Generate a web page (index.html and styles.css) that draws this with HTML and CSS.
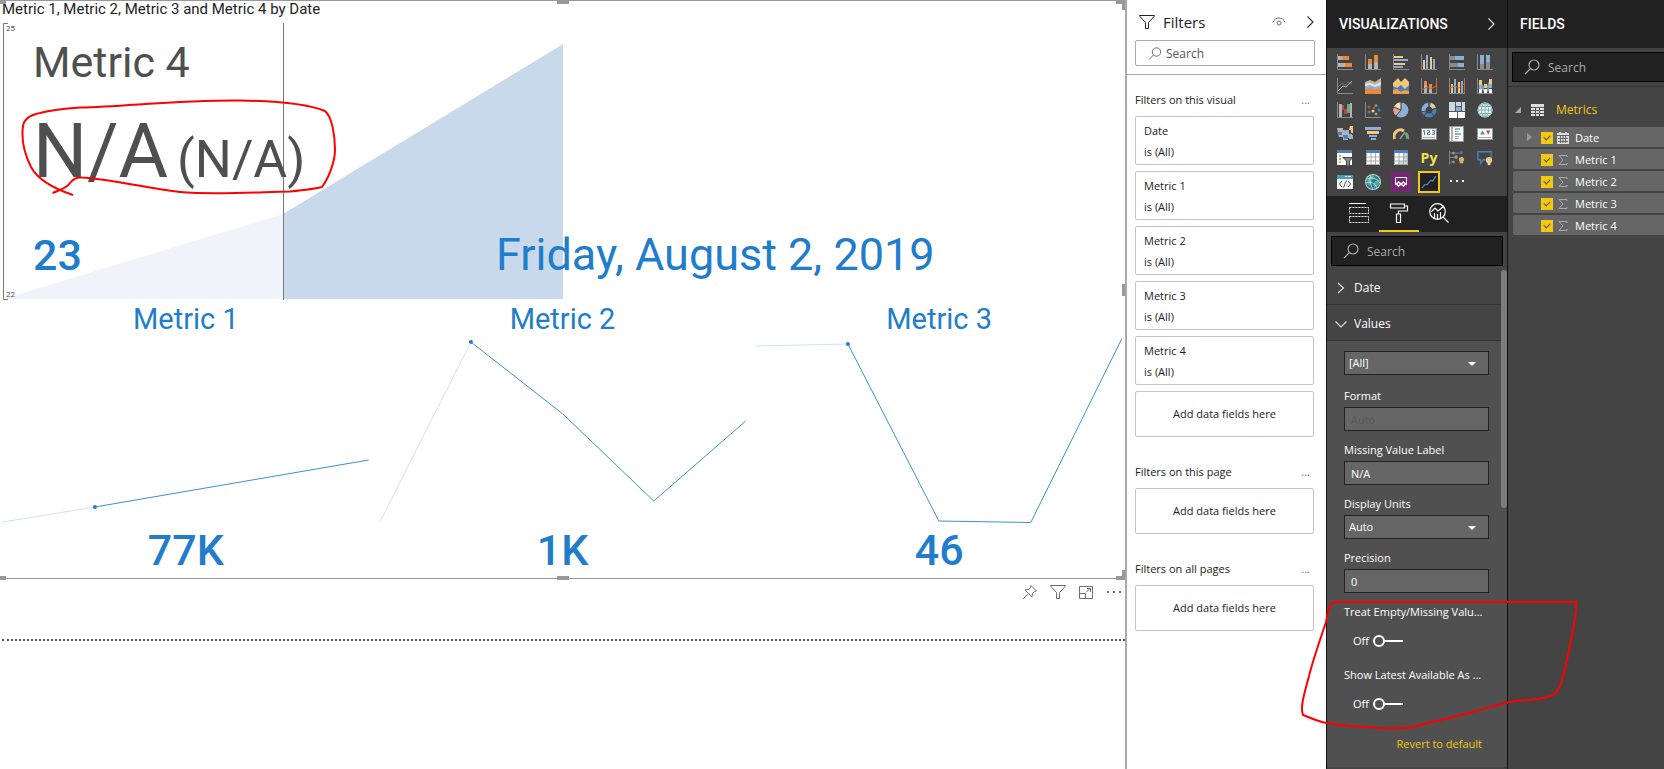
FILE: index.html
```
<!DOCTYPE html>
<html lang="en">
<head>
<meta charset="utf-8">
<title>Report editor</title>
<link rel="stylesheet" href="styles.css">
</head>
<body>
<div class="app">
  <main class="report">
    <section class="visual">
      <h1 class="visual-title">Metric 1, Metric 2, Metric 3 and Metric 4 by Date</h1>
      <div class="hero">
        <svg class="hero-plot" viewBox="0 0 1119 277" preserveAspectRatio="none" aria-hidden="true">
          <path d="M0 276L280 191V276Z" fill="#f0f4fa"/>
          <path d="M280 191L560 21V276H280Z" fill="#c8d9eb"/>
          <path d="M5 .5H.5V276.5H5M280.5 0V277" fill="none" stroke="#777"/>
        </svg>
        <span class="axis-max">25</span>
        <span class="axis-min">22</span>
        <p class="hero-name">Metric 4</p>
        <p class="hero-value">N/A <span class="hero-change">(N/A)</span></p>
        <div class="hero-foot"><span class="hero-count">23</span><span class="hero-date">Friday, August 2, 2019</span></div>
      </div>
      <div class="metrics">
        <article class="metric">
          <h2>Metric 1</h2>
          <svg class="spark" viewBox="0 0 366 184" preserveAspectRatio="none" aria-hidden="true"><path class="faint" d="M0 183L92 168"/><path d="M92 168L366 121"/><circle cx="92" cy="168" r="2"/></svg>
          <p>77K</p>
        </article>
        <article class="metric">
          <h2>Metric 2</h2>
          <svg class="spark" viewBox="0 0 366 184" preserveAspectRatio="none" aria-hidden="true"><path class="faint" d="M0 183L91 3"/><path d="M91 3L183 75L274 162L366 82"/><circle cx="91" cy="3" r="2"/></svg>
          <p>1K</p>
        </article>
        <article class="metric">
          <h2>Metric 3</h2>
          <svg class="spark" viewBox="0 0 366 184" preserveAspectRatio="none" aria-hidden="true"><path class="faint" d="M0 7L92 5"/><path d="M92 5L183 182L275 183.5L366 0"/><circle cx="92" cy="5" r="2"/></svg>
          <p>46</p>
        </article>
      </div>
      <i class="handle nw"></i><i class="handle n"></i><i class="handle ne"></i><i class="handle e"></i><i class="handle se"></i><i class="handle s"></i><i class="handle sw"></i>
      <svg class="mark mark-value" width="320" height="104" viewBox="18 96 320 104" aria-hidden="true"><path d="M52.500 193C60 190 67 188 70 183C73 179 77 177 82 177.500C110 179 150 189 180 192C215 195 260 192 290 191.500C305 190 315 189 322 187C330 176 335 160 335 150C335 135 332 117 325 111C310 105 280 101 240 100.500C180 100 130 106 80 107.500C60 109 48 111 40 113C30 115 24 119 23 126C21 140 25 155 31 167C38 180 55 189 73 195"/></svg>
    </section>
    <div class="visual-tools">
      <button type="button" aria-label="Pin visual"><svg width="16" height="16" viewBox="0 0 16 16" class="line"><path d="M9 1.500L14.500 7L12.500 7.500L10.500 9.500L10 13L3 6L6.500 5.500L8.500 3.500ZM6 10L1 15"/></svg></button>
      <button type="button" aria-label="Filters on visual"><svg width="16" height="16" viewBox="0 0 16 16" class="line"><path d="M.5 1.500H15.500V2L9.500 8.500V14.500H6.500V8.500L.5 2Z"/></svg></button>
      <button type="button" aria-label="Focus mode"><svg width="16" height="16" viewBox="0 0 16 16" class="line"><path d="M1.500 2.500H14.500V14.500H1.500ZM1.500 9.500H7.500V14.500M8 8.500L12 4.500M9 4.500H12.500V8"/></svg></button>
      <button type="button" aria-label="More options"><svg width="16" height="16" viewBox="0 0 16 16" fill="#706e6c"><path d="M1 7h2v2H1zM7 7h2v2H7zM13 7h2v2h-2z"/></svg></button>
    </div>
    <hr class="page-edge">
  </main>

  <aside class="filters">
    <header class="filters-head">
      <svg width="16" height="16" viewBox="0 0 16 16" fill="none" stroke="#222"><path d="M.5 1.500H15.500V2L9.500 8.500V14.500H6.500V8.500L.5 2Z"/></svg>
      <h2>Filters</h2>
      <button type="button" aria-label="Show filters to readers"><svg width="14" height="12" viewBox="0 0 14 12" class="line"><path d="M1 6.500C2 3.500 4.500 2 7 2S12 3.500 13 6.500"/><circle cx="7" cy="7" r="2"/></svg></button>
      <button type="button" aria-label="Collapse filters"><svg width="8" height="14" viewBox="0 0 8 14" fill="none" stroke="#333" stroke-width="1.200"><path d="M1.500 1.500L7 7L1.500 12.500"/></svg></button>
    </header>
    <label class="filters-search">
      <svg width="14" height="14" viewBox="0 0 14 14" class="line"><circle cx="8.500" cy="5" r="4.200"/><path d="M5.500 8L1 12.500"/></svg>
      <input type="text" placeholder="Search" aria-label="Search filters">
    </label>
    <hr>
    <section class="filter-group">
      <div class="group-head"><h3>Filters on this visual</h3><button type="button" aria-label="Visual filter options">...</button></div>
      <div class="card"><b>Date</b><span>is (All)</span></div>
      <div class="card"><b>Metric 1</b><span>is (All)</span></div>
      <div class="card"><b>Metric 2</b><span>is (All)</span></div>
      <div class="card"><b>Metric 3</b><span>is (All)</span></div>
      <div class="card"><b>Metric 4</b><span>is (All)</span></div>
      <div class="drop">Add data fields here</div>
    </section>
    <section class="filter-group">
      <div class="group-head"><h3>Filters on this page</h3><button type="button" aria-label="Page filter options">...</button></div>
      <div class="drop">Add data fields here</div>
    </section>
    <section class="filter-group">
      <div class="group-head"><h3>Filters on all pages</h3><button type="button" aria-label="All pages filter options">...</button></div>
      <div class="drop">Add data fields here</div>
    </section>
  </aside>

  <aside class="viz">
    <header class="dark-head"><h2>VISUALIZATIONS</h2>
      <button type="button" aria-label="Collapse visualizations"><svg width="8" height="14" viewBox="0 0 8 14" fill="none" stroke="#ddd" stroke-width="1.200"><path d="M1.500 1.500L7 7L1.500 12.500"/></svg></button>
    </header>
    <div class="gallery">
      <button type="button" aria-label="Stacked bar chart"><svg viewBox="0 0 16 16"><path class="ax" d="M.5 0V15.500H16"/><path fill="#b3b3b3" d="M1 2h4v4H1zM1 9h7v4H1z"/><path fill="#e8883a" d="M5 2h7v4H5zM8 9h7v4H8z"/></svg></button>
      <button type="button" aria-label="Stacked column chart"><svg viewBox="0 0 16 16"><path class="ax" d="M.5 0V15.500H16"/><path fill="#e8883a" d="M3 5h4v5H3zM9 1h4v7H9z"/><path fill="#b3b3b3" d="M3 10h4v5H3zM9 8h4v7H9z"/></svg></button>
      <button type="button" aria-label="Clustered bar chart"><svg viewBox="0 0 16 16"><path class="ax" d="M.5 0V15.500H16"/><path fill="#f2c879" d="M1 2h9v2H1zM1 9h11v2H1z"/><path fill="#8ab0d8" d="M1 5h14v2H1zM1 12h9v2H1z"/></svg></button>
      <button type="button" aria-label="Clustered column chart"><svg viewBox="0 0 16 16"><path class="ax" d="M.5 0V15.500H16"/><path fill="#f2c879" d="M2 6h2v9H2zM9 3h2v12H9z"/><path fill="#8ab0d8" d="M5 1h2v14H5zM12 5h2v10h-2z"/></svg></button>
      <button type="button" aria-label="100% stacked bar chart"><svg viewBox="0 0 16 16"><path class="ax" d="M.5 0V15.500H16"/><path fill="#8c8c8c" d="M1 2h5v4H1zM1 9h8v4H1z"/><path fill="#8ab0d8" d="M6 2h9v4H6zM9 9h6v4H9z"/></svg></button>
      <button type="button" aria-label="100% stacked column chart"><svg viewBox="0 0 16 16"><path class="ax" d="M.5 0V15.500H16"/><path fill="#8ab0d8" d="M3 1h4v9H3zM9 1h4v7H9z"/><path fill="#8c8c8c" d="M3 10h4v5H3zM9 8h4v7H9z"/></svg></button>

      <button type="button" aria-label="Line chart"><svg viewBox="0 0 16 16"><path class="ax" d="M.5 0V15.500H16"/><path fill="none" stroke="#4a80bd" d="M1 9L5 5L8 7L11 4L15 6"/><path fill="none" stroke="#e8a091" d="M1 13L6 8L9 9L15 3"/></svg></button>
      <button type="button" aria-label="Area chart"><svg viewBox="0 0 16 16"><path fill="#c9b594" d="M0 4L5 2L10 4L16 0V10H0Z"/><path fill="#dce9f2" d="M0 6L5 5L10 7L16 4V13H0Z"/><path fill="#8ab0d8" d="M0 8L5 7L10 9L16 7V14H0Z"/><path fill="#e8883a" d="M0 11L5 10L10 12L16 9V16H0Z"/></svg></button>
      <button type="button" aria-label="Stacked area chart"><svg viewBox="0 0 16 16"><path fill="#f2c879" d="M0 5L5 0L8 4L12 0L16 4V11H0Z"/><path fill="#4a80bd" d="M0 8L4 10L8 7L12 11L16 7V16H0Z"/><path fill="#f39c4e" d="M0 12L4 11L8 14L12 12L16 13V16H0Z"/></svg></button>
      <button type="button" aria-label="Line and stacked column chart"><svg viewBox="0 0 16 16"><path class="ax" d="M.5 0V15.500H16"/><path fill="#e8883a" d="M3 3h3v6H3zM8 6h3v4H8z"/><path fill="#b3b3b3" d="M3 7h3v8H3zM8 10h3v5H8z"/><path fill="none" stroke="#c66a3a" d="M1 12L6 9L10 11L15 8M15.500 0V15"/></svg></button>
      <button type="button" aria-label="Line and clustered column chart"><svg viewBox="0 0 16 16"><path class="ax" d="M.5 0V15.500H16"/><path fill="#f2c879" d="M2 6h2v9H2zM9 4h2v11H9z"/><path fill="#8ab0d8" d="M5 1h2v14H5zM12 3h2v12h-2z"/><path fill="none" stroke="#c66a3a" d="M1 10L6 8L10 10L15 6M15.500 0V15"/></svg></button>
      <button type="button" aria-label="Ribbon chart"><svg viewBox="0 0 16 16"><path class="ax" d="M.5 0V15.500H16"/><path fill="#6f9cc8" d="M5 6L7 9V14L5 12ZM10 8L12 3V13L10 14Z"/><path fill="#f2c879" d="M2 2h3v5H2zM7 6h3v4H7zM12 1h3v5h-3z"/><path fill="#8ab0d8" d="M2 7h3v4H2zM12 6h3v4h-3z"/><path fill="#fff" d="M2 11h3v4H2zM7 11h3v4H7zM12 11h3v4h-3z"/></svg></button>

      <button type="button" aria-label="Waterfall chart"><svg viewBox="0 0 16 16"><path class="ax" d="M.5 0V15.500H16"/><path fill="#b3b3b3" d="M2 2h3v13H2zM13 1h2v14h-2z"/><path fill="#b84a3c" d="M5 3h2v5H5zM7 7h3v5H7z"/><path fill="#6aa58c" d="M10 2h3v9h-3z"/></svg></button>
      <button type="button" aria-label="Scatter chart"><svg viewBox="0 0 16 16"><path class="ax" d="M.5 0V15.500H16"/><g fill="#4a80bd"><circle cx="4" cy="10" r="1.500"/><circle cx="14" cy="8" r="1.500"/></g><g fill="#c7503c"><circle cx="4" cy="5" r="1.500"/><circle cx="9" cy="6" r="1.200"/></g><circle cx="11" cy="3.500" r="1.500" fill="#6aa58c"/><circle cx="8" cy="9" r="1.500" fill="#f2c879"/><circle cx="11" cy="12" r="1.500" fill="#999"/></svg></button>
      <button type="button" aria-label="Pie chart"><svg viewBox="0 0 16 16"><circle cx="8" cy="8" r="7.500" fill="#8ab0d8"/><path fill="#f7ddb0" d="M7.500 8V.5A7.500 7.500 0 0 0 1 5Z"/><path fill="#e8a091" d="M7 8L.8 5.500A7.500 7.500 0 0 0 3 13.500Z"/><path fill="none" stroke="#444" d="M8 0V8L.5 5M8 8L3 14"/></svg></button>
      <button type="button" aria-label="Donut chart"><svg viewBox="0 0 16 16" fill="none" stroke-width="4"><circle cx="8" cy="8" r="5.500" stroke="#4a80bd"/><path stroke="#8ab0d8" d="M3 10A5.500 5.500 0 0 1 7 2.600"/><path stroke="#f2c879" d="M9.500 2.700A5.500 5.500 0 0 1 13 6"/><path stroke="#444" stroke-width="1" d="M8 0V5M16 6L10 8M3 14L6 10M0 10L5 9M13 14L10 10"/></svg></button>
      <button type="button" aria-label="Treemap"><svg viewBox="0 0 16 16"><path fill="#c7d8e8" d="M0 0h16v16H0z"/><path fill="#fff" d="M0 9h16v7H0z"/><path fill="#8ab0d8" d="M7 4h5v5H7z"/><path fill="none" stroke="#555" d="M6.500 0V9M0 9.500H16M8.500 9V16M6 4.500H12M12.500 0V9"/></svg></button>
      <button type="button" aria-label="Map"><svg viewBox="0 0 16 16"><circle cx="8" cy="8" r="7.500" fill="#f1f7f7"/><g fill="none" stroke="#75b3b0"><circle cx="8" cy="8" r="7"/><ellipse cx="8" cy="8" rx="3.500" ry="7"/><path d="M8 1V15M1 8H15M2.500 4.500H13.500M2.500 11.500H13.500"/></g></svg></button>

      <button type="button" aria-label="Filled map"><svg viewBox="0 0 16 16"><path fill="#b3b3b3" d="M0 2H6V4H12V8H15V12H11V14H6V11H2Z"/><path fill="#4a80bd" d="M0 6H5V9H1ZM6 9H11V13H7Z"/><path fill="#8ab0d8" d="M7 4H11V7H7ZM12 9H16V13H12Z"/><path fill="#f2c879" d="M13 0H16V7H14V4H12Z"/></svg></button>
      <button type="button" aria-label="Funnel"><svg viewBox="0 0 16 16"><path fill="#8ab0d8" d="M0 1h16v3H0zM4 9h8v2H4zM6 12h5v2H6z"/><path fill="#f2c879" d="M2 5h12v3H2z"/></svg></button>
      <button type="button" aria-label="Gauge"><svg viewBox="0 0 16 16" fill="none" stroke-width="3"><path stroke="#f2c879" d="M1.500 13A6.500 6.500 0 0 1 11 5"/><path stroke="#6aa58c" d="M12.500 7A6.500 6.500 0 0 1 14.500 13"/><path stroke="#999" stroke-width="1.500" d="M7 13L12 6"/></svg></button>
      <button type="button" aria-label="Card"><svg viewBox="0 0 16 16"><path fill="#f4f4f4" stroke="#888" d="M.5 2.500h15v11H.5z"/><path fill="none" stroke="#4a80bd" d="M2 5.500L3.500 4.500V9M6 4.500H8.500V6.500H6.500V8.500H9M11 4.500H13.500V8.500H11M11.500 6.500H13"/><path stroke="#aaa" d="M2 11.500H14"/></svg></button>
      <button type="button" aria-label="Multi-row card"><svg viewBox="0 0 16 16"><path fill="#fff" stroke="#999" d="M.5 .5h14v15H.5z"/><path fill="#b3b3b3" d="M2 1h2v14H2z"/><path fill="#8ab0d8" d="M6 2h5v2H6zM6 7h6v2H6z"/><path stroke="#aaa" d="M6 5.500H10M6 10.500H10M6 12.500H10"/></svg></button>
      <button type="button" aria-label="KPI"><svg viewBox="0 0 16 16"><path fill="#fff" stroke="#999" d="M.5 2.500h15v11H.5z"/><path fill="#4f9a7a" d="M3 8.500L5.500 4.500L8 8.500Z"/><path fill="#c7503c" d="M9 4.500H13.500L11.200 8.500Z"/><path stroke="#aaa" d="M2 11.500H14"/></svg></button>

      <button type="button" aria-label="Slicer"><svg viewBox="0 0 16 16"><path fill="#fff" d="M0 0h15v15H0z"/><path fill="#4a80bd" d="M0 0h15v3H0z"/><path fill="#f2a65a" d="M2 5h2v2H2zM2 11h2v2H2z"/><path fill="#8ab0d8" d="M2 8h2v2H2z"/><path fill="#888" stroke="#444" d="M6 7.500h10L12.500 11v5h-3v-5z"/></svg></button>
      <button type="button" aria-label="Table"><svg viewBox="0 0 16 16"><path fill="#fff" d="M1 0h14v15H1z"/><path fill="#4a80bd" d="M1 0h14v3H1z"/><path fill="none" stroke="#aaa" d="M1.500 3V14.500H14.500V3M1 7H15M1 11H15M6 3V15M10.500 3V15"/></svg></button>
      <button type="button" aria-label="Matrix"><svg viewBox="0 0 16 16"><path fill="#fff" d="M1 0h14v15H1z"/><path fill="#4a80bd" d="M1 0h14v3H1z"/><path fill="#c7d8e8" d="M10 3h5v12H5V11h5z"/><path fill="none" stroke="#aaa" d="M1.500 3V14.500H14.500V3M1 7H15M1 11H15M6 3V15M10.500 3V15"/></svg></button>
      <button type="button" aria-label="Python visual" class="py">Py</button>
      <button type="button" aria-label="Key influencers"><svg viewBox="0 0 18 16"><path fill="none" stroke="#888" d="M.5 0V15.500M1 2.500H12M1 7.500H8M1 12.500H5"/><g fill="#999"><circle cx="5" cy="2.500" r="1.500"/><circle cx="8" cy="7" r="2"/><circle cx="5" cy="12.500" r="1.500"/></g><circle cx="14" cy="2" r="1.500" fill="#4a80bd"/><path fill="#d8b06a" d="M11 10a3 3 0 1 1 5 2v2h-4v-2z"/></svg></button>
      <button type="button" aria-label="Q&amp;A"><svg viewBox="0 0 18 16"><path fill="none" stroke="#4a80bd" stroke-width="1.500" d="M1 1H16V10H7L4 14V10H1Z"/><circle cx="13.500" cy="10.500" r="3.500" fill="#f2c879"/><path fill="#ddd" d="M12 13h3v3h-3z"/></svg></button>

      <button type="button" aria-label="Script visual"><svg viewBox="0 0 16 16"><path fill="#f4f4f4" d="M0 1h16v14H0z"/><path fill="#45a0b5" d="M0 1h16v4H0z"/><path fill="#fff" d="M8 2h2v1H8zM11 2h3v1h-3z"/><path fill="none" stroke="#555" d="M5 7L2.500 10L5 13M9.500 6.500L6.500 13.500M11 7L13.500 10L11 13"/></svg></button>
      <button type="button" aria-label="ArcGIS map"><svg viewBox="0 0 16 16"><circle cx="8" cy="8" r="8" fill="#c8d5da"/><circle cx="8" cy="8" r="7" fill="#2378ad"/><path fill="#58b577" d="M3 4L8 1L10 4L6 7L7 9L4 12L2 8ZM10 7L14 6V10L10 14L8 11Z"/><path fill="none" stroke="#d7ebef" stroke-width=".7" d="M2 5C6 3 12 4 15 9M1 9C6 7 10 9 12 14M6 1C4 6 5 10 8 15"/></svg></button>
      <button type="button" aria-label="Power Apps visual" class="purple"><svg viewBox="0 0 16 16"><path fill="none" stroke="#fff" d="M5 10.500H2.500V3.500H13.500V10.500H11"/><path fill="none" stroke="#fff" stroke-width="1.500" d="M5.500 8L3.500 10L5.500 12L10.500 8L12.500 10L10.500 12Z"/></svg></button>
      <button type="button" aria-label="Power KPI matrix" class="chosen"><svg viewBox="0 0 18 18"><path fill="none" stroke="#4a80bd" stroke-width="1.500" d="M1 16L4 12L7 12L11 7L13 8L17 2"/></svg></button>
      <button type="button" aria-label="More visuals"><svg viewBox="0 0 16 16"><path fill="#fff" d="M1 6h2v2H1zM7 6h2v2H7zM13 6h2v2h-2z"/></svg></button>
    </div>
    <nav class="tabs">
      <button type="button" aria-label="Fields"><svg width="20" height="20" viewBox="0 0 20 20"><g fill="none" stroke="#fff"><path d="M0 .5H17"/><path stroke-dasharray="2 1" d="M.5 4.500H19.500V10.500H.5ZM.5 13.500H19.500V19.500H.5Z"/></g></svg></button>
      <button type="button" aria-label="Format" class="on"><svg width="20" height="20" viewBox="0 0 20 20"><path fill="none" stroke="#fff" stroke-width="1.200" d="M1.500 1H15.500V5H1.500ZM15.500 3H18.500V8H9.500V11M7.500 11H11.500V19.500H7.500Z"/></svg></button>
      <button type="button" aria-label="Analytics"><svg width="20" height="20" viewBox="0 0 20 20" fill="none" stroke="#fff" stroke-width="1.200"><circle cx="8.500" cy="8.500" r="7.800"/><path d="M14 14L19.500 19.500M2 9L6 5L9 8L15 3M5.500 15V10M8.500 16V11M11.500 15V9"/></svg></button>
    </nav>
    <label class="dark-search">
      <svg width="16" height="16" viewBox="0 0 16 16" fill="none" stroke="#aaa" stroke-width="1.200"><circle cx="10" cy="6" r="5"/><path d="M6.500 9.500L1 15"/></svg>
      <input type="text" placeholder="Search" aria-label="Search format options">
    </label>
    <div class="format">
      <button type="button" class="fold"><svg width="12" height="12" viewBox="0 0 12 12"><path d="M3 1L8.500 6L3 11"/></svg>Date</button>
      <button type="button" class="fold"><svg width="12" height="12" viewBox="0 0 12 12"><path d="M.5 3.500L6 9L11.500 3.500"/></svg>Values</button>
      <div class="options">
        <div class="pick series"><select aria-label="Series"><option>[All]</option></select><svg width="8" height="4" viewBox="0 0 8 4"><path fill="#fff" d="M0 0h8L4 4z"/></svg></div>
        <label for="fmt">Format</label>
        <input id="fmt" class="box" type="text" placeholder="Auto">
        <label for="missing">Missing Value Label</label>
        <input id="missing" class="box" type="text" value="N/A">
        <label for="units">Display Units</label>
        <div class="pick"><select id="units"><option>Auto</option></select><svg width="8" height="4" viewBox="0 0 8 4"><path fill="#fff" d="M0 0h8L4 4z"/></svg></div>
        <label for="prec">Precision</label>
        <input id="prec" class="box" type="text" value="0">
        <label for="treat">Treat Empty/Missing Valu...</label>
        <div class="toggle">Off<input id="treat" type="checkbox" role="switch"></div>
        <label for="latest">Show Latest Available As ...</label>
        <div class="toggle">Off<input id="latest" type="checkbox" role="switch"></div>
        <button type="button" class="revert">Revert to default</button>
      </div>
      <i class="scroll-thumb"></i>
    </div>
    <svg class="mark mark-toggles" width="280" height="134" viewBox="1299 598 280 134" aria-hidden="true"><path d="M1333 602L1576.500 602C1576 620 1572 635 1571 640C1568 656 1565 670 1561 684C1559 690 1555 694 1551 696C1542 699 1534 700 1520 700.500C1505 702 1490 707 1480 710C1455 717 1440 720 1420 725C1410 729 1385 729 1373 727.500C1350 726 1338 726 1322 722C1312 719 1306 716 1303 715C1300 708 1304 694 1309 676C1313 660 1320 640 1326 622C1328 612 1328 602 1337 602"/></svg>
  </aside>

  <aside class="fields">
    <header class="dark-head"><h2>FIELDS</h2></header>
    <label class="dark-search">
      <svg width="16" height="16" viewBox="0 0 16 16" fill="none" stroke="#aaa" stroke-width="1.200"><circle cx="10" cy="6" r="5"/><path d="M6.500 9.500L1 15"/></svg>
      <input type="text" placeholder="Search" aria-label="Search fields">
    </label>
    <div class="table-name">
      <svg width="6" height="6" viewBox="0 0 6 6"><path fill="#aaa" d="M6 0V6H0z"/></svg>
      <svg width="13" height="12" viewBox="0 0 13 12"><path fill="#ddd" d="M0 0h13v12H0z"/><path stroke="#555" d="M0 3.500H13M0 6.500H13M0 9.500H13M4.500 3V12M8.500 3V12"/></svg>
      <span>Metrics</span>
    </div>
    <ul class="field-list">
      <li><svg class="expand" width="5" height="8" viewBox="0 0 5 8"><path fill="#999" d="M0 0L5 4L0 8z"/></svg><label><input type="checkbox" checked><svg width="12" height="12" viewBox="0 0 12 12"><path fill="#ddd" d="M0 1h2V0h2v1h4V0h2v1h2v11H0z"/><path fill="none" stroke="#666" d="M0 3.500H12M1 6.500H11M1 9.500H11M3.500 4V11M6 4V11M8.500 4V11"/></svg>Date</label></li>
      <li><label><input type="checkbox" checked><svg width="12" height="12" viewBox="0 0 12 12"><path class="sum" d="M10 3V1.500H2L6 6L2 10.500H10V9"/></svg>Metric 1</label></li>
      <li><label><input type="checkbox" checked><svg width="12" height="12" viewBox="0 0 12 12"><path class="sum" d="M10 3V1.500H2L6 6L2 10.500H10V9"/></svg>Metric 2</label></li>
      <li><label><input type="checkbox" checked><svg width="12" height="12" viewBox="0 0 12 12"><path class="sum" d="M10 3V1.500H2L6 6L2 10.500H10V9"/></svg>Metric 3</label></li>
      <li><label><input type="checkbox" checked><svg width="12" height="12" viewBox="0 0 12 12"><path class="sum" d="M10 3V1.500H2L6 6L2 10.500H10V9"/></svg>Metric 4</label></li>
    </ul>
  </aside>
</div>
</body>
</html>
```
FILE: styles.css
```
*, *::before, *::after { box-sizing: border-box; }
body { margin: 0; background: #fff; color: #222; font: 12px/20px "Open Sans", "Noto Sans", sans-serif; }
h1, h2, h3, p, ul { margin: 0; padding: 0; font-weight: 400; }
button { padding: 0; border: 0; background: none; color: inherit; font: inherit; display: grid; place-items: center; }
input, select { margin: 0; font: inherit; color: inherit; min-width: 0; }
hr { margin: 0; border: 0; }
svg { display: block; flex: none; }
.line { fill: none; stroke: #706e6c; }
.app { display: grid; grid-template-columns: 1fr 200px 181px 156px; min-height: 100vh; overflow: hidden; }

/* report page */
.report { border-right: 2px solid #aaa; font-family: Roboto, "Liberation Sans", sans-serif; min-width: 0; }
.visual { position: relative; border-top: 1px solid #999; border-bottom: 1px solid #999; padding: 0 3px 0 3px; }
.visual-title { font-size: 15px; line-height: 16px; color: #222; padding-bottom: 6px; margin-left: -1px; }
.hero { position: relative; padding: 9px 0 0 30px; color: #4f4f4f; height: 277px; }
.hero-plot { position: absolute; inset: 0; width: 100%; height: 100%; }
.hero p, .hero-foot { position: relative; }
.axis-max, .axis-min { position: absolute; left: 3px; font-size: 8px; line-height: 10px; }
.axis-max { top: 1px; }
.axis-min { bottom: 0; }
.hero-name { font-size: 43px; line-height: 60px; }
.hero-value { font-size: 76px; line-height: 118px; }
.hero-change { font-size: 52px; line-height: 60px; margin-left: -10px; }
.hero-foot { display: grid; grid-template-columns: 463fr 626fr; font-size: 43px; line-height: 90px; color: #217dcc; }
.hero-count { font-weight: 500; }
.hero-date { font-size: 45px; }
.metrics { display: grid; grid-template-columns: repeat(3, 1fr); gap: 11px; text-align: center; color: #217dcc; }
.metric h2 { font-size: 29px; line-height: 39px; }
.metric p { font-size: 43px; line-height: 55px; font-weight: 500; }
.spark { width: 100%; height: 184px; overflow: visible; fill: #217dcc; }
.spark path { fill: none; stroke: #3c8fd6; }
.spark .faint { stroke: #cfe2f4; }
.handle { position: absolute; background: #999; width: 12px; height: 4px; }
.nw { left: 0; top: -1px; width: 6px; }
.n { left: 50%; margin-left: -6px; top: -1px; }
.s { left: 50%; margin-left: -6px; bottom: -2px; }
.sw { left: 0; bottom: -2px; width: 6px; }
.e { right: 0; top: 283px; width: 3px; height: 12px; }
.ne, .se { right: 0; width: 9px; height: 10px; background: none; border-right: 3px solid #999; }
.ne { top: -1px; border-top: 4px solid #999; }
.se { bottom: -2px; border-bottom: 4px solid #999; }
.mark { position: absolute; fill: none; stroke: #f00; stroke-width: 2; pointer-events: none; }
.mark-value { left: 18px; top: 95px; }
.visual-tools { display: flex; justify-content: flex-end; gap: 12px; padding: 5px 3px 39px 0; }
.page-edge { border-top: 2px dotted #555; margin: 0 0 0 2px; }

/* filters */
.filters { padding: 0 11px 0 8px; border-right: 1px solid #111; }
.filters-head { display: flex; align-items: center; height: 40px; padding: 4px 1px 0 4px; }
.filters-head h2 { font-size: 15px; margin: 0 auto 0 8px; }
.filters-head button + button { margin-left: 20px; }
.filters-search { display: flex; align-items: center; gap: 4px; height: 26px; border: 1px solid #aaa; border-radius: 2px; padding: 2px 0 0 12px; }
.filters-search input { border: 0; flex: 1; padding: 0; }
.filters-search input::placeholder { color: #555; }
.filters hr { border-top: 1px solid #aaa; margin: 8px -11px 15px -8px; }
.filter-group { display: grid; gap: 6px; margin: 0 1px 25px 0; font-size: 11px; }
.group-head { display: flex; justify-content: space-between; padding-right: 4px; }
.group-head h3 { font-size: 11px; }
.group-head button { color: #706e6c; }
.card { border: 1px solid #c4c4c4; border-radius: 2px; height: 49px; padding: 3px 8px; line-height: 21px; }
.card b { display: block; font-weight: 400; }
.card span { display: block; }
.drop { border: 1px solid #c4c4c4; border-radius: 2px; line-height: 44px; text-align: center; }

/* dark panes */
.viz, .fields { background: #444; color: #fff; position: relative; min-width: 0; }
.viz { border-right: 1px solid #111; }
.dark-head { display: flex; align-items: center; justify-content: space-between; height: 48px; background: #212121; padding: 0 12px; }
.dark-head h2 { font: 500 14px/20px Roboto, sans-serif; }
.gallery { display: grid; grid-template-columns: repeat(6, 28px); grid-auto-rows: 24px; padding: 2px 4px; height: 148px; }
.gallery svg { width: 16px; height: 16px; }
.ax { fill: none; stroke: #8a8a8a; }
.py { font: 700 14px/20px "Open Sans", sans-serif; color: #f2e14c; }
.purple { background: #742774; width: 20px; height: 20px; place-self: center; }
.chosen { background: #212121; border: 2px solid #f2c811; width: 22px; height: 22px; place-self: center; }
.tabs { display: flex; height: 36px; background: #212121; padding-left: 12px; }
.tabs button { width: 40px; border-bottom: 2px solid transparent; }
.tabs .on { border-color: #f2c811; }
.dark-search { display: flex; align-items: center; gap: 8px; height: 30px; margin: 4px 4px 3px 4px; padding-left: 11px; background: #212121; border: 1px solid #000; }
.dark-search input { background: none; border: 0; padding: 1px 0 0; flex: 1; width: 50px; }
.dark-search input::placeholder { color: #aaa; }
.format { position: relative; }
.fold { display: flex; align-items: center; gap: 7px; width: 100%; height: 36px; padding: 3px 0 0 8px; border-bottom: 1px solid #333; }
.fold svg { fill: none; stroke: #ddd; stroke-width: 1.2; }
.options { background: #505050; padding: 10px 18px 13px 17px; display: flow-root; }
.options label { display: block; margin-top: 9px; margin-bottom: 1px; line-height: 20px; font-size: 11px; white-space: nowrap; }
.pick { position: relative; }
.series { margin-bottom: 11px; }
.pick svg { position: absolute; right: 13px; top: 11px; }
.pick select, .box { display: block; width: 100%; height: 24px; background: #666; border: 1px solid #222; border-radius: 0; padding: 0 6px; appearance: none; font-size: 11px; }
.pick select { padding: 0 4px; }
.box::placeholder { color: #575757; }
.toggle { display: flex; align-items: center; gap: 4px; padding-left: 9px; margin: 8px 0 14px; height: 21px; font-size: 11px; }
.toggle input { appearance: none; width: 30px; height: 12px; background: linear-gradient(#fff, #fff) right center / 18px 2px no-repeat; position: relative; }
.toggle input::before { content: ""; position: absolute; left: 0; top: 0; width: 12px; height: 12px; border: 2px solid #fff; border-radius: 50%; }
.revert { color: #f2c811; font-size: 11px; margin: 20px 7px 0 auto; }
.scroll-thumb { position: absolute; right: 0; top: 1px; width: 6px; height: 238px; border-radius: 3px; background: #7d7d7d; }
.mark-toggles { left: -28px; top: 598px; z-index: 1; }

/* fields */
.fields .dark-search { margin-right: 0; margin-bottom: 4px; border-right: 0; }
.table-name { display: flex; align-items: center; border-top: 1px solid #333; color: #f2c811; height: 41px; padding: 5px 0 0 7px; }
.table-name svg + svg { margin-left: 10px; }
.table-name span { margin-left: 12px; }
.field-list { list-style: none; display: grid; gap: 2px; padding-left: 5px; }
.field-list li { position: relative; height: 20px; background: #666; border-radius: 2px 0 0 2px; padding-left: 28px; }
.expand { position: absolute; left: 14px; top: 6px; }
.field-list label { display: flex; align-items: center; height: 20px; padding-top: 2px; font-size: 11px; }
.field-list label svg { margin: 0 6px 0 4px; }
.field-list input { appearance: none; width: 12px; height: 12px; background: #f2c811; position: relative; }
.field-list input::after { content: ""; position: absolute; left: 3px; top: 3px; width: 6px; height: 4px; border: solid #555; border-width: 0 0 1px 1px; transform: rotate(-45deg); }
.sum { fill: none; stroke: #aaa; }
```
